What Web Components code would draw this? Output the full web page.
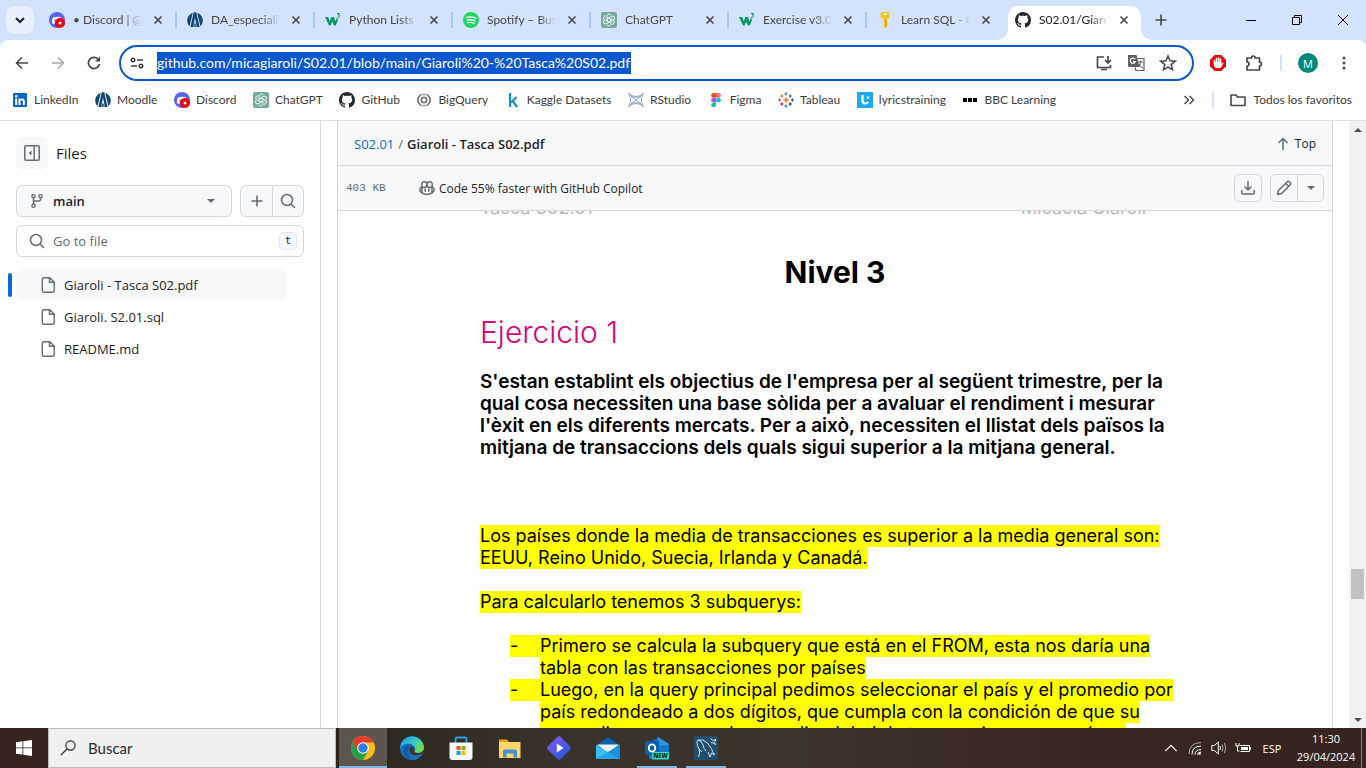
<!DOCTYPE html>
<html lang="es">
<head>
<meta charset="utf-8">
<title>S02.01/Giaroli - Tasca S02.pdf</title>
<style>
html, body { margin: 0; height: 100%; overflow: hidden; }
body { font-family: "Open Sans", "Noto Sans", sans-serif; color: #1f2328; background: #fff; }
</style>
</head>
<body>
<desktop-view></desktop-view>
<script>
const svg = (box, body) => `<svg viewBox="0 0 ${box} ${box}" fill="none" stroke="none" aria-hidden="true">${body}</svg>`;
const GITHUB = 'M8 0C3.58 0 0 3.58 0 8c0 3.54 2.29 6.53 5.47 7.59.4.07.55-.17.55-.38 0-.19-.01-.82-.01-1.49-2.01.37-2.53-.49-2.69-.94-.09-.23-.48-.94-.82-1.13-.28-.15-.68-.52-.01-.53.63-.01 1.08.58 1.23.82.72 1.21 1.87.87 2.33.66.07-.52.28-.87.51-1.07-1.78-.2-3.64-.89-3.64-3.95 0-.87.31-1.59.82-2.15-.08-.2-.36-1.02.08-2.12 0 0 .67-.21 2.2.82.64-.18 1.32-.27 2-.27s1.36.09 2 .27c1.53-1.04 2.2-.82 2.2-.82.44 1.1.16 1.92.08 2.12.51.56.82 1.27.82 2.15 0 3.07-1.87 3.75-3.65 3.95.29.25.54.73.54 1.48 0 1.07-.01 1.93-.01 2.2 0 .21.15.46.55.38A8.01 8.01 0 0016 8c0-4.42-3.58-8-8-8z';
const KNOT = [0, 60, 120, 180, 240, 300].map(a => `<path transform="rotate(${a} 8 8)" d="M6 7V4.300a2.300 2.300 0 0 1 4.300-1M8 5.800l2.500 1.500"/>`).join('');
const ICONS = {
  discord: svg(16, '<circle cx="8" cy="8" r="8" fill="#5865f2"/><path d="M4 5.500q4-1.600 8 0q1.600 3 1 5.500q-1 1-2.200 1l-.6-1.200h-4.400l-.6 1.200q-1.500-.2-2.200-1q-.4-3 1-5.500z" fill="#fff"/><circle cx="6.200" cy="8.600" r="1" fill="#5865f2"/><circle cx="11" cy="11" r="5" fill="#e8000b"/><circle cx="11" cy="11" r="1.500" fill="#fff"/>'),
  moodle: svg(16, '<path d="M4.800 1.200Q0 4 .2 9q.3 3.500 2.300 5.200L5.800 1zM11.200 1.200Q16 4 15.800 9q-.3 3.500-2.300 5.200L10.200 1z" fill="#12466f"/><path d="M6.800.3h2.400L12.600 15H9.800L8 5.500 6.200 15H3.400z" fill="#12466f"/><path d="M6.900 11.500h2.200l.7 3.500H6.200z" fill="#2c7ca8"/>'),
  w3: svg(16, '<path d="M0 5h3.200l1.600 4.200L6.400 5h2.500l1.500 4.200L12 5.500 13 8l-2.300 5.500H9L7.300 9.500 5.600 13.500H4z" fill="#059862"/><path d="M12 1.500h2.600l-1.300 1.500q1.700 0 1.400 1.500-.4 1.200-2.700.8" stroke="#059862" stroke-width="1"/>'),
  spotify: svg(16, '<circle cx="8" cy="8" r="8" fill="#1ed760"/><path d="M3.500 5.500q5-1.400 9.500.8M4 8.200q4.400-1.200 8.100.8M4.500 10.700q3.600-1 6.700.8" stroke="#fff" stroke-width="1.300" stroke-linecap="round"/>'),
  chatgpt: svg(16, `<rect width="16" height="16" rx="2" fill="#75a99c"/><g stroke="#fff" stroke-width=".9">${KNOT}</g>`),
  key: svg(16, '<path d="M5 0h6l1.500 1.500v3.500L10 7.500V9l1 1-1 1 1 1.200-1 1V15L8.500 16 7 15V7.500L3.500 5V1.500z" fill="#f5c518"/><path d="M8.800 7v8" stroke="#b8860b" stroke-width=".8"/><rect x="6" y="1.500" width="4" height="1.500" rx=".6" fill="#fff"/>'),
  github: svg(16, `<path d="${GITHUB}" fill="#24292f"/>`),
  linkedin: svg(16, '<rect x="1" y="1" width="14" height="14" rx="1" fill="#0a66c2"/><path d="M3.200 6.500h2V13h-2zM6.500 6.500h1.900v.9c.9-1.500 4.400-1.500 4.400 1.600v4h-2V9.600c0-1.800-2.300-1.700-2.300 0V13h-2z" fill="#fff"/><circle cx="4.200" cy="4.300" r="1.200" fill="#fff"/>'),
  bigquery: svg(16, '<path d="M5 2.500L2 6v4l3 3.500M11 2.500L14 6v4l-3 3.500" stroke="#757575" stroke-width="1.700" stroke-linejoin="round"/><path d="M5.500 2.500h5M5.500 13.500h5" stroke="#9a9a9a" stroke-width="1.400"/><circle cx="8" cy="8" r="2.600" stroke="#757575" stroke-width="1.900"/>'),
  kaggle: svg(16, '<path d="M5 1v14M11.500 5L6 10.500M7.500 8.500L12 15" stroke="#1295c4" stroke-width="2.200"/>'),
  rstudio: svg(16, '<g stroke="#8aa5c0" stroke-width="1"><path d="M.500 1.500q7.500 6 15 0M.500 14.500q7.500-6 15 0M.500 1.500q4 6.500 0 13M15.500 1.500q-4 6.500 0 13M1 2l14 12M15 2L1 14M3 5h10M3 11h10"/></g>'),
  figma: svg(16, '<path d="M8 1H5.500a2.400 2.400 0 0 0 0 4.800H8z" fill="#f24e1e"/><path d="M8 1h2.500a2.400 2.400 0 0 1 0 4.800H8z" fill="#ff7262"/><path d="M8 5.800H5.500a2.400 2.400 0 0 0 0 4.800H8z" fill="#a259ff"/><circle cx="10.500" cy="8.200" r="2.400" fill="#1abcfe"/><path d="M8 10.500H5.500A2.400 2.400 0 1 0 8 13z" fill="#0acf83"/>'),
  tableau: svg(16, '<path d="M8 5.200v5.600M5.200 8h5.600" stroke="#e8762d" stroke-width="1.400"/><g stroke-width="1.200"><path d="M8 .2v3.200M6.400 1.800h3.200M8 12.600v3.200M6.400 14.200h3.200" stroke="#5b879b"/><path d="M3.800 2.300v3.400M2.100 4h3.400" stroke="#e8762d"/><path d="M12.200 2.300v3.400M10.500 4h3.400M1.600 6.600v2.800M.2 8H3" stroke="#5b6591"/><path d="M3.800 10.300v3.400M2.100 12h3.400" stroke="#c72035"/><path d="M12.200 10.300v3.400M10.500 12h3.400M14.400 6.600v2.800M13 8h2.800" stroke="#1f447e"/></g>'),
  lyrics: svg(16, '<rect width="16" height="16" fill="#1eaaf1"/><path d="M5.500 3v5.500q0 3 3 3 1.500 0 2.500-1.500" stroke="#fff" stroke-width="2.200"/><circle cx="11" cy="5.500" r="1.200" fill="#fff"/>'),
  bbc: svg(16, '<path d="M1 6h4v4H1zM6 6h4v4H6zM11 6h4v4h-4z" fill="#000"/>'),
  folder: svg(16, '<path d="M1 3h5l1.500 2H15v8.500H1z" stroke="#474747" stroke-width="1.600" stroke-linejoin="round"/>'),
  down: svg(16, '<path d="M4 6l4 4 4-4" stroke="#1f1f1f" stroke-width="2"/>'),
  close: svg(16, '<path d="M4.500 4.500l7 7M11.500 4.500l-7 7" stroke="#474747" stroke-width="1.600"/>'),
  plus: svg(16, '<path d="M8 2.500v11M2.500 8h11" stroke="currentColor" stroke-width="1.600"/>'),
  minimize: svg(16, '<path d="M3 8.500h10" stroke="#000"/>'),
  restore: svg(16, '<path d="M3.500 5.500h7v7h-7zM5.500 5.500v-2h7v7h-2" stroke="#000"/>'),
  exit: svg(16, '<path d="M3 3l10 10M13 3L3 13" stroke="#000"/>'),
  back: svg(16, '<path d="M14 8H3M8 2.500L2.500 8 8 13.500" stroke="#474747" stroke-width="1.600"/>'),
  forward: svg(16, '<path d="M2 8h11M8 2.500L13.500 8 8 13.500" stroke="#aaa" stroke-width="1.600"/>'),
  reload: svg(16, '<path d="M13.500 9A5.600 5.600 0 1 1 12 4l1.500 1.500" stroke="#474747" stroke-width="1.700"/><path d="M14 1.500V6.500H9z" fill="#474747"/>'),
  tune: svg(16, '<g stroke="#3c3c3c" stroke-width="1.600"><circle cx="4" cy="5" r="1.700"/><path d="M8 5h6M2 11h6"/><circle cx="12" cy="11" r="1.700"/></g>'),
  install: svg(18, '<path d="M9 3H2.500v10.500h13V11M6 15.500h6M13 2v7M10 6l3 3 3-3" stroke="#474747" stroke-width="1.700"/>'),
  translate: svg(18, '<path d="M1 1h8.500l3 12H2.500Q1 13 1 11.500z" fill="#5f5f5f"/><path d="M8 5.200A2.600 2.600 0 1 0 8.300 7.500H6" stroke="#fff" stroke-width="1.200"/><path d="M10.500 4.500H17V16.500H9L8 13.500" stroke="#5f5f5f" stroke-width="1.200"/><path d="M11 8h5M13.500 6.500V8q0 3-2 5M12 10q1 3 4 4" stroke="#5f5f5f"/>'),
  star: svg(18, '<path d="M9 2l2 4.800 5.200.4-4 3.400 1.300 5.100L9 13l-4.500 2.700 1.300-5.100-4-3.400L7 6.800z" stroke="#474747" stroke-width="1.500"/>'),
  adblock: svg(16, '<path d="M4.700 0h6.600L16 4.700v6.600L11.300 16H4.700L0 11.300V4.700z" fill="#e5090e"/><path d="M4.500 8V5.500M6.500 7V3.500M8.500 7V3M10.500 7.500V4" stroke="#fff" stroke-width="1.500" stroke-linecap="round"/><path d="M3.800 7h7.500v2l1.200-1.500 1 .5-2.500 4.500q-3 1.500-6 0L3.800 10z" fill="#fff"/>'),
  puzzle: svg(18, '<path d="M2 4h4.500q0-2 1.800-2t1.800 2h4.400v4.200q2 0 2 1.800t-2 1.800V16H2v-3.800q2-.3 2-2.200T2 7.800z" stroke="#474747" stroke-width="1.700" stroke-linejoin="round"/>'),
  menu: svg(16, '<circle cx="8" cy="3" r="1.500" fill="#474747"/><circle cx="8" cy="8" r="1.500" fill="#474747"/><circle cx="8" cy="13" r="1.500" fill="#474747"/>'),
  more: svg(16, '<path d="M3.500 4L7.500 8l-4 4M8.500 4l4 4-4 4" stroke="#474747" stroke-width="1.500"/>'),
  panel: svg(16, '<path d="M1.800.8h12.400q1 0 1 1v12.400q0 1-1 1H1.800q-1 0-1-1V1.800q0-1 1-1zM10.200 1v14" stroke="#636c76" stroke-width="1.500"/><path d="M7.500 5.500v5L4.500 8z" fill="#636c76"/>'),
  branch: svg(16, '<g stroke="#636c76" stroke-width="1.400"><circle cx="4.500" cy="3.200" r="1.600"/><circle cx="4.500" cy="12.800" r="1.600"/><circle cx="11.500" cy="3.200" r="1.600"/><path d="M4.500 5v6M11.500 5v1.500Q11.500 8 10 8H4.500"/></g>'),
  caret: svg(16, '<path d="M4 6h8l-4 4z" fill="#636c76"/>'),
  search: svg(16, '<circle cx="7" cy="7" r="5.500" stroke="#636c76" stroke-width="1.500"/><path d="M11 11l4 4" stroke="#636c76" stroke-width="1.600"/>'),
  file: svg(16, '<path d="M3.800.8h6L14.200 5v8.600q0 1.600-1.500 1.600H3.800q-1.500 0-1.500-1.600V2.400Q2.300.8 3.800.8zM9.500 1v4.200H14" stroke="#636c76" stroke-width="1.400"/>'),
  up: svg(16, '<path d="M8 14V3M3.500 7L8 2.500 12.500 7" stroke="#636c76" stroke-width="1.500"/>'),
  copilot: svg(16, '<path d="M3 7q-1-5 2-5.300Q7.800 1.500 8 4q.2-2.500 3-2.300Q14 2 13 7M3 6.800q2.500 1.200 4.300 0L8 4l.7 2.800q1.800 1.200 4.300 0M2.800 6.500Q.8 8 .8 10q0 1.500 2 2.800 5.200 3.200 10.400 0 2-1.300 2-2.800 0-2-2-3.500M3 7v6M13 7v6" stroke="#636c76" stroke-width="1.500"/><path d="M6.200 9v2.200M9.800 9v2.200" stroke="#636c76" stroke-width="1.500" stroke-linecap="round"/>'),
  download: svg(16, '<path d="M8 1v8.500M4.500 6.500L8 10l3.500-3.500M1.800 10v3q0 1 1 1h10.400q1 0 1-1v-3" stroke="#636c76" stroke-width="1.500"/>'),
  pencil: svg(16, '<path d="M1.500 14.500l1-4L11.300 1.700q1-.9 2 0l1 1q.9 1 0 2L5.500 13.500zM9.800 3.500l2.800 2.800" stroke="#636c76" stroke-width="1.500" stroke-linejoin="round"/>'),
  arrowUp: svg(16, '<path d="M4 10h8L8 6z" fill="#505050"/>'),
  arrowDown: svg(16, '<path d="M4 6h8l-4 4z" fill="#505050"/>'),
  windows: svg(16, '<path d="M0 2.200l6.500-.9v6.200H0zM7.300 1.200L16 0v7.500H7.300zM0 8.300h6.500v6.300L0 13.700zM7.300 8.300H16V16l-8.700-1.300z" fill="#fff"/>'),
  loupe: svg(16, '<circle cx="10.500" cy="5.500" r="4.600" stroke="#1f1f1f" stroke-width="1.100"/><path d="M7 9L.8 15.200" stroke="#1f1f1f" stroke-width="1.200"/>'),
  chrome: svg(24, '<circle cx="12" cy="12" r="12" fill="#fbbc16"/><path d="M1.600 6A12 12 0 0 0 12 24l5.200-9L12 12z" fill="#25a047"/><path d="M12 6.500h10.600a12 12 0 0 0-21-.5L7 15z" fill="#e33b2e"/><circle cx="12" cy="12" r="5.800" fill="#fff"/><circle cx="12" cy="12" r="4.700" fill="#2f7de9"/>'),
  edge: svg(24, '<defs><linearGradient id="a" x2="1" y2=".4"><stop stop-color="#1c9de0"/><stop offset=".6" stop-color="#36c6c8"/><stop offset="1" stop-color="#6edb50"/></linearGradient></defs><circle cx="12" cy="12" r="12" fill="#1570bd"/><path d="M.5 9.500A12 12 0 0 1 24 11q.2 6-6 6-4 0-3.500-2.200Q16 13 14.500 10.500 11 6 5 8 2 9 .3 12z" fill="url(#a)"/><path d="M9 11q-3 5.500 1.500 10 4 3 9 1-4.500 2-8.500 1.500Q3.500 22 3.300 15 3.500 10 8.500 9q3 0 5 2Q10 9.500 9 11z" fill="#155aa0"/><path d="M9.500 12q-1.500 4 2 6.500 4.500 2.500 11-.7l.8 1.200L24 13q-2 4-6 4-4 0-3.500-2.200.5-2-1.500-3.600-2-1-3.500.8z" fill="#3b342d"/><path d="M11.500 18.500q4.500 2.500 11-.7Q19 24 12 24 8 20 9 14q.5 3 2.500 4.500z" fill="#1d6fbd"/>'),
  store: svg(24, '<path d="M6.500 7V3q0-1.500 1.500-1.500h8q1.500 0 1.500 1.500v4" stroke="#26a6e8" stroke-width="1.800"/><path d="M.5 6.500h23V21q0 3-3 3h-17q-3 0-3-3z" fill="#fafafa"/><path d="M7.500 10h4v4h-4z" fill="#f25022"/><path d="M12.500 10h4v4h-4z" fill="#7fba00"/><path d="M7.500 15h4v4h-4z" fill="#00a4ef"/><path d="M12.500 15h4v4h-4z" fill="#ffb900"/>'),
  explorer: svg(24, '<path d="M1 3.500h8l2 2.500v4H1z" fill="#e8a317"/><path d="M1 6h21.500v16H1z" fill="#ffd468"/><path d="M5 21.500V15q0-1.500 1.500-1.500h11q1.500 0 1.500 1.500v6.500h-3.500v-4h-7v4z" fill="#3f92d6"/>'),
  clip: svg(24, '<defs><linearGradient id="c" x2=".8" y2="1"><stop stop-color="#8d5cf5"/><stop offset="1" stop-color="#2255d6"/></linearGradient></defs><path d="M10.500.7q1.500-1.200 3 0l9.800 9.800q1.200 1.500 0 3l-9.800 9.800q-1.500 1.200-3 0L.7 13.500q-1.200-1.500 0-3z" fill="url(#c)"/><path d="M9.800 7.500v9l6.700-4.500z" fill="#fff"/>'),
  mail: svg(24, '<path d="M0 9.500L12 1l12 8.500V13H0z" fill="#0a63b0"/><path d="M1 8.500h22L12 17z" fill="#f2f2f2"/><path d="M0 9l12 7 12-7v14H0z" fill="#35c0f5"/><path d="M24 9v14H0z" fill="#1b8fdc"/><path d="M12 16L24 23H0z" fill="#2db2ed" opacity=".6"/>'),
  outlook: svg(24, '<path d="M4 7l9-6 11 7v12H4z" fill="#1768b8"/><path d="M13 1l11 7-11 8V7z" fill="#2a96dc"/><path d="M4 10l20-1v11l-6 3H4z" fill="#1279ca"/><rect x="0" y="5" width="14" height="14" rx="1" fill="#0f5fae"/><ellipse cx="7" cy="12" rx="3.200" ry="3.700" stroke="#fff" stroke-width="1.800"/><rect x="7" y="16" width="17" height="7.500" rx="1" fill="#31dccb"/>'),
  dolphin: svg(24, '<rect width="24" height="24" rx="3" fill="#21506f"/><path d="M4.500 21q2-4 .5-8Q1.500 6 4 4q5-1.500 9.500 3 4 5 7 12l-3-2-1.500 4-2-5M4 4q4 1 5 5 1 5 3 6M5 13l3 3M16.500 2.500l2.500 2 3-1-1.500 3 1 2-2.500-1.500-2-.5" stroke="#cfe3ee" stroke-width="1"/>'),
  chevronUp: svg(16, '<path d="M1.500 11.500L8 5l6.500 6.500" stroke="#fff" stroke-width="1.300"/>'),
  wifi: svg(16, '<g stroke="#fff" stroke-width="1"><path d="M2 14Q2 3 14 2.500" opacity=".6"/><path d="M5 14.500q0-8 9-8.500M8 14.500q0-4.500 6-5M10.500 14.500q0-2 3.500-2.500"/></g><circle cx="12.500" cy="13.500" r="1.300" fill="#fff"/>'),
  volume: svg(16, '<path d="M.8 5.500h2.500l4-3.500v12l-4-3.500H.8z" stroke="#fff"/><path d="M9 6q1 2 0 4" stroke="#fff"/><path d="M11 4.500q2 3.500 0 7M13.500 3q2.500 5 0 10" stroke="#aaa"/>'),
  battery: svg(16, '<path d="M4.500 5.500h10v6h-9M14.500 7.500h1v2h-1M1 3v3h3V3M2.500 6v5h2" stroke="#fff"/><path d="M6 7h7v3H6z" fill="#fff"/>'),
};

/* Base class: puts the styles and markup of each element in its open root. */
class Base extends HTMLElement {
  constructor() { super(); this.attachShadow({ mode: 'open' }); }
  connectedCallback() {
    this.shadowRoot.innerHTML = `<style>*{box-sizing:border-box}button{font:inherit;color:inherit;background:none;border:0;padding:0;margin:0;display:flex;align-items:center;justify-content:center}a{color:inherit;text-decoration:none}${this.css()}</style>${this.html()}`;
  }
  attr(n) { return this.getAttribute(n) || ''; }
}

customElements.define('app-icon', class extends Base {
  css() { const s = this.attr('size') || 16; return `:host{display:block;flex:none;width:${s}px;height:${s}px}svg{display:block;width:100%;height:100%}`; }
  html() { return ICONS[this.attr('name')] || ''; }
});

customElements.define('browser-tab', class extends Base {
  css() { return `
    :host{display:flex;flex:0 1 138px;min-width:0;height:34px;position:relative;padding:0 2px 0 3px;color:#474747}
    .tab{flex:1;min-width:0;display:flex;align-items:center;gap:8px;padding:0 9px 6px 7px;border-radius:10px 10px 0 0}
    .title{flex:1;min-width:0;font-size:12px;line-height:16px;white-space:nowrap;overflow:hidden;-webkit-mask-image:linear-gradient(90deg,#000 75%,transparent)}
    :host(:not([active]):not([last]))::after{content:"";position:absolute;right:0;top:6px;width:2px;height:16px;background:#a8c7fa}
    :host([active]) .tab{background:#fff;color:#1f1f1f}
    :host([active])::before{content:"";position:absolute;left:-7px;right:-8px;bottom:0;height:10px;background:radial-gradient(circle at 0 0,transparent 9px,#fff 10px) left/10px 10px no-repeat,radial-gradient(circle at 100% 0,transparent 9px,#fff 10px) right/10px 10px no-repeat}
  `; }
  html() { return `<div class="tab"><app-icon name="${this.attr('icon')}"></app-icon><span class="title"><slot></slot></span><button aria-label="Cerrar"><app-icon name="close"></app-icon></button></div>`; }
});

customElements.define('tab-strip', class extends Base {
  css() { return `
    :host{display:flex;align-items:flex-end;height:40px;background:#d3e3fd;font-family:Lato,"Open Sans",sans-serif}
    .find{width:28px;height:28px;margin:0 5px 6px 6px;border-radius:9px;background:#e9f1fe}
    nav{flex:0 1 1104px;min-width:0;display:flex}
    .new{width:28px;height:28px;margin:0 auto 6px 4px;color:#474747}
    .win{display:flex;height:40px}.win button{width:46px}
  `; }
  html() { return `
    <button class="find" aria-label="Buscar pestañas"><app-icon name="down"></app-icon></button>
    <nav>
      <browser-tab icon="discord">• Discord | @Amigos</browser-tab>
      <browser-tab icon="moodle">DA_especialització</browser-tab>
      <browser-tab icon="w3">Python Lists</browser-tab>
      <browser-tab icon="spotify">Spotify – Buscar</browser-tab>
      <browser-tab icon="chatgpt">ChatGPT</browser-tab>
      <browser-tab icon="w3">Exercise v3.0</browser-tab>
      <browser-tab icon="key" last>Learn SQL - Codecademy</browser-tab>
      <browser-tab icon="github" active>S02.01/Giaroli</browser-tab>
    </nav>
    <button class="new" aria-label="Nueva pestaña"><app-icon name="plus"></app-icon></button>
    <div class="win"><button aria-label="Minimizar"><app-icon name="minimize"></app-icon></button><button aria-label="Restaurar"><app-icon name="restore"></app-icon></button><button aria-label="Cerrar ventana"><app-icon name="exit"></app-icon></button></div>`; }
});

customElements.define('address-bar', class extends Base {
  css() { return `
    :host{display:block;background:#d3e3fd}
    .row{display:flex;align-items:center;height:46px;padding:0 4px;background:#fff;border-radius:8px 8px 0 0}
    .nav{width:36px;height:36px}
    form{flex:1;min-width:0;display:flex;align-items:center;height:36px;margin:0 6px 0 7px;padding:0 8px;border:2px solid #0b57d0;border-radius:18px}
    form button{width:32px;height:32px;flex:none}
    form .site{width:16px;margin-right:12px}
    input{flex:0 1 474px;width:474px;min-width:0;height:22px;padding:0;border:0;outline:0;background:#0b57d0;color:#fff;font:14px/22px Lato,"Open Sans",sans-serif}
    .gap{flex:1}
    .ext{width:36px;height:36px}
    .sep{width:2px;height:16px;background:#d3e3fd;margin:0 8px}
    .me{width:20px;height:20px;margin:0 8px;border-radius:10px;background:#00897b;color:#fff;font-size:11px}
    .menu{width:36px;height:36px}
  `; }
  html() { return `<div class="row">
    <button class="nav" aria-label="Atrás"><app-icon name="back"></app-icon></button>
    <button class="nav" aria-label="Adelante"><app-icon name="forward"></app-icon></button>
    <button class="nav" aria-label="Recargar"><app-icon name="reload"></app-icon></button>
    <form><button type="button" class="site" aria-label="Ver información del sitio"><app-icon name="tune"></app-icon></button>
      <input aria-label="Dirección" value="github.com/micagiaroli/S02.01/blob/main/Giaroli%20-%20Tasca%20S02.pdf"><span class="gap"></span>
      <button type="button" aria-label="Instalar"><app-icon name="install" size="18"></app-icon></button><button type="button" aria-label="Traducir"><app-icon name="translate" size="18"></app-icon></button><button type="button" aria-label="Favorito"><app-icon name="star" size="18"></app-icon></button></form>
    <button class="ext" aria-label="AdBlock"><app-icon name="adblock"></app-icon></button>
    <button class="ext" aria-label="Extensiones"><app-icon name="puzzle" size="18"></app-icon></button>
    <span class="sep"></span><button class="me" aria-label="Perfil">M</button><button class="menu" aria-label="Menú"><app-icon name="menu"></app-icon></button></div>`; }
});

customElements.define('bookmark-link', class extends Base {
  css() { return `:host{display:block;flex:none}a{display:flex;align-items:center;gap:6px;font-size:12px;line-height:16px;color:#3c3c3c;white-space:nowrap}:host([icon=folder]) a{gap:8px}`; }
  html() { return `<a href="#"><app-icon name="${this.attr('icon')}"></app-icon><slot></slot></a>`; }
});

customElements.define('bookmarks-bar', class extends Base {
  css() { return `
    :host{display:flex;align-items:center;height:35px;padding:0 14px 7px 12px;border-bottom:1px solid #dedfe0;background:#fff;font-family:Lato,"Open Sans",sans-serif}
    nav{flex:1;min-width:0;display:flex;justify-content:space-between;max-width:1044px;margin-right:auto;overflow:hidden}
    .sep{width:2px;height:16px;background:#d3e3fd;margin:0 16px 0 15px}
  `; }
  html() { return `<nav>
    ${[['linkedin','LinkedIn'],['moodle','Moodle'],['discord','Discord'],['chatgpt','ChatGPT'],['github','GitHub'],['bigquery','BigQuery'],['kaggle','Kaggle Datasets'],['rstudio','RStudio'],['figma','Figma'],['tableau','Tableau'],['lyrics','lyricstraining'],['bbc','BBC Learning']].map(([i, t]) => `<bookmark-link icon="${i}">${t}</bookmark-link>`).join('')}
    </nav><button aria-label="Más favoritos"><app-icon name="more"></app-icon></button><span class="sep"></span><bookmark-link icon="folder">Todos los favoritos</bookmark-link>`; }
});

customElements.define('file-row', class extends Base {
  css() { return `
    :host{display:block;position:relative;height:32px;border-radius:6px}
    a{display:flex;align-items:center;gap:8px;height:100%;padding:0 0 0 24px;font-size:13px;line-height:20px}
    :host([current]){background:#f6f8fa}
    :host([current])::before{content:"";position:absolute;left:-8px;top:4px;width:4px;height:24px;border-radius:3px;background:#0969da}
  `; }
  html() { return `<a href="#"><app-icon name="file"></app-icon><slot></slot></a>`; }
});

customElements.define('file-sidebar', class extends Base {
  css() { return `
    :host{display:flex;flex-direction:column;flex:none;width:321px;padding:16px 16px 0;border-right:1px solid #d0d7de;overflow:hidden}
    header{display:flex;align-items:center;gap:8px;height:32px;margin-bottom:16px}
    header button{width:32px;height:32px;border-radius:6px;background:#f6f8fa}
    h2{margin:0;font-size:15px;line-height:20px;font-weight:500}
    .row{display:flex;gap:8px;height:32px;margin-bottom:8px}
    .branch{flex:1;justify-content:flex-start;gap:8px;padding:0 12px;border:1px solid #d0d7de;border-radius:6px;background:#f6f8fa;font-size:13px;font-weight:600}
    .branch app-icon:last-child{margin-left:auto}
    .pair{display:flex;border:1px solid #d0d7de;border-radius:6px;background:#f6f8fa;color:#636c76}
    .pair button{width:31px}.pair button+button{border-left:1px solid #d0d7de}
    label{display:flex;align-items:center;gap:8px;height:32px;padding:0 6px 0 12px;border:1px solid #d0d7de;border-radius:6px}
    input{flex:1;min-width:0;border:0;outline:0;padding:0;font:13px/20px "Open Sans",sans-serif}
    input::placeholder{color:#636c76;opacity:1}
    kbd{width:18px;height:18px;border:1px solid #e2e6ea;border-radius:5px;background:#f6f8fa;font:11px/16px "DejaVu Sans Mono",monospace;text-align:center}
    nav{display:flex;flex-direction:column;margin:12px 17px 0 0}
  `; }
  html() { return `
    <header><button aria-label="Contraer árbol"><app-icon name="panel"></app-icon></button><h2>Files</h2></header>
    <div class="row"><button class="branch"><app-icon name="branch"></app-icon>main<app-icon name="caret"></app-icon></button><div class="pair"><button aria-label="Añadir archivo"><app-icon name="plus"></app-icon></button><button aria-label="Buscar en el repositorio"><app-icon name="search"></app-icon></button></div></div>
    <label><app-icon name="search"></app-icon><input placeholder="Go to file" aria-label="Go to file"><kbd>t</kbd></label>
    <nav><file-row current>Giaroli - Tasca S02.pdf</file-row><file-row>Giaroli. S2.01.sql</file-row><file-row>README.md</file-row></nav>`; }
});

customElements.define('file-header', class extends Base {
  css() { return `
    :host{display:block;background:#f6f8fa}
    div{display:flex;align-items:center;height:45px;border-bottom:1px solid #d0d7de}
    .path{padding:2px 16px 0;font-size:13px;line-height:20px;font-weight:600;gap:4px}
    .path a:first-child{color:#0969da;font-weight:500}.path i{font-style:normal;font-weight:400;color:#636c76}
    .top{margin-left:auto;gap:4px;font-size:12px;font-weight:500}
    .tools{padding:0 8px;font-size:12px}
    .tools small{width:73px;font:11px/16px "Liberation Mono",monospace;color:#636c76}
    .tools a{display:flex;align-items:center;gap:4px;margin-right:auto}
    .tools .box{height:28px;border:1px solid #d0d7de;border-radius:6px;margin-left:8px}
    .box button{width:26px;height:26px}.box button+button{border-left:1px solid #d0d7de}
  `; }
  html() { return `
    <div class="path"><a href="#">S02.01</a><i>/</i><span>Giaroli - Tasca S02.pdf</span><button class="top"><app-icon name="up"></app-icon>Top</button></div>
    <div class="tools"><small>403 KB</small><a href="#"><app-icon name="copilot"></app-icon>Code 55% faster with GitHub Copilot</a>
      <div class="box"><button aria-label="Descargar"><app-icon name="download"></app-icon></button></div><div class="box"><button aria-label="Editar"><app-icon name="pencil"></app-icon></button><button aria-label="Más opciones de edición"><app-icon name="caret"></app-icon></button></div></div>`; }
});

customElements.define('pdf-page', class extends Base {
  css() { return `
    :host{display:block;flex:1;min-height:0;overflow:hidden;background:#fff;color:#000;font-family:Inter,"Open Sans",sans-serif}
    article{max-width:710px;margin:0 auto;font-size:18px;line-height:22px;white-space:nowrap}
    header{display:flex;justify-content:space-between;align-items:flex-end;height:8px;overflow:hidden;padding-right:44px;color:#b7b7b7}
    h1,h2,h3,p,ul{margin:0;font-weight:400}
    h1{margin-top:33px;font-size:30px;line-height:40px;font-weight:700;text-align:center}
    h2{margin-top:20px;font-size:30px;line-height:40px;font-weight:300;color:#d5047f}
    h3{margin-top:19px;font-size:19px;font-weight:600}
    p{margin-top:22px}.first{margin-top:66px}
    span{display:block;width:fit-content;background:#ff0}
    ul{margin-top:22px;padding:0;list-style:none}
    li{display:grid;grid-template-columns:30px 1fr;margin-left:30px}
    li::before{content:"-";height:22px;background:#ff0}
  `; }
  html() { return `<article>
    <header><div>Tasca S02.01</div><div>Micaela Giaroli</div></header>
    <h1>Nivel 3</h1><h2>Ejercicio 1</h2>
    <h3>S'estan establint els objectius de l'empresa per al següent trimestre, per la<br>qual cosa necessiten una base sòlida per a avaluar el rendiment i mesurar<br>l'èxit en els diferents mercats. Per a això, necessiten el llistat dels països la<br>mitjana de transaccions dels quals sigui superior a la mitjana general.</h3>
    <p class="first"><span>Los países donde la media de transacciones es superior a la media general son:</span><span>EEUU, Reino Unido, Suecia, Irlanda y Canadá.</span></p>
    <p><span>Para calcularlo tenemos 3 subquerys:</span></p>
    <ul><li><div><span>Primero se calcula la subquery que está en el FROM, esta nos daría una</span><span>tabla con las transacciones por países</span></div></li>
    <li><div><span>Luego, en la query principal pedimos seleccionar el país y el promedio por</span><span>país redondeado a dos dígitos, que cumpla con la condición de que su</span><span>promedio sea mayor al promedio global de transacciones por países.</span></div></li></ul>
  </article>`; }
});

customElements.define('scroll-bar', class extends Base {
  css() { return `
    :host{display:flex;flex-direction:column;align-items:center;flex:none;width:17px;background:#f1f1f1}
    button{width:17px;height:17px}
    .before{flex:431}.thumb{flex:30;width:13px;background:#c1c1c1}.after{flex:112}
  `; }
  html() { return `<button aria-label="Subir"><app-icon name="arrowUp"></app-icon></button><div class="before"></div><div class="thumb"></div><div class="after"></div><button aria-label="Bajar"><app-icon name="arrowDown"></app-icon></button>`; }
});

customElements.define('task-button', class extends Base {
  css() { return `
    :host{display:block;position:relative;width:48px;height:40px}
    button{width:100%;height:100%}
    :host([open])::after{content:"";position:absolute;left:4px;right:4px;bottom:0;height:2px;background:#76b9ed}
    :host([active]){background:#5c564f}
    :host([active])::after{left:0;right:0}
    b{position:absolute;left:19px;top:24px;width:17px;font:800 6px/8px "Open Sans",sans-serif;color:#052a2a;text-align:center}
  `; }
  html() { return `<button aria-label="${this.attr('label')}"><app-icon name="${this.attr('icon')}" size="24"></app-icon></button>${this.hasAttribute('badge') ? `<b>${this.attr('badge')}</b>` : ''}`; }
});

customElements.define('task-bar', class extends Base {
  css() { return `
    :host{display:flex;flex:none;height:40px;background:linear-gradient(90deg,#38241e 0,#2b261e 25%,#38322a 40%,#3d342b 58%,#38271f 80%,#35241f);color:#fff}
    .start{width:48px}
    label{flex:0 1 288px;display:flex;align-items:center;gap:12px;padding:0 11px;margin-right:3px;background:#f0f0f0;border:1px solid #bdbdbd}
    input{flex:1;min-width:0;border:0;outline:0;background:none;padding:0;font:15px/20px Lato,"Open Sans",sans-serif}
    input::placeholder{color:#2b2b2b;opacity:1}
    .apps{display:flex;gap:1px;margin-right:auto}
    .tray{display:flex;align-items:center;gap:8px;font-size:11px}
    .tray button{width:16px;height:40px}
    .tray .lang{width:24px;margin:0 4px 0 1px}
    time{width:60px;line-height:18px;text-align:center;white-space:nowrap}
    .edge{width:5px;border-left:1px solid #877c77;margin-left:5px}
  `; }
  html() { return `
    <button class="start" aria-label="Inicio"><app-icon name="windows"></app-icon></button>
    <label><app-icon name="loupe"></app-icon><input placeholder="Buscar" aria-label="Buscar"></label>
    <div class="apps">
      <task-button icon="chrome" label="Chrome" open active></task-button><task-button icon="edge" label="Edge"></task-button><task-button icon="store" label="Store"></task-button><task-button icon="explorer" label="Explorador"></task-button><task-button icon="clip" label="Clipchamp"></task-button><task-button icon="mail" label="Correo"></task-button><task-button icon="outlook" label="Outlook" open badge="NEW"></task-button><task-button icon="dolphin" label="MySQL Workbench" open></task-button>
    </div>
    <div class="tray"><button aria-label="Iconos ocultos"><app-icon name="chevronUp" size="14"></app-icon></button><button aria-label="Red"><app-icon name="wifi"></app-icon></button><button aria-label="Volumen"><app-icon name="volume"></app-icon></button><button aria-label="Batería"><app-icon name="battery"></app-icon></button><button class="lang">ESP</button><time>11:30<br>29/04/2024</time></div><div class="edge"></div>`; }
});

customElements.define('desktop-view', class extends Base {
  css() { return `
    :host{display:flex;flex-direction:column;height:100vh;overflow:hidden}
    main{flex:1;min-height:0;display:flex}
    section{flex:1;min-width:0;display:flex;flex-direction:column;margin:0 16px;border:solid #d0d7de;border-width:0 1px}
  `; }
  html() { return `<tab-strip></tab-strip><address-bar></address-bar><bookmarks-bar></bookmarks-bar>
    <main><file-sidebar></file-sidebar><section><file-header></file-header><pdf-page></pdf-page></section><scroll-bar></scroll-bar></main>
    <task-bar></task-bar>`; }
});
</script>
</body>
</html>
